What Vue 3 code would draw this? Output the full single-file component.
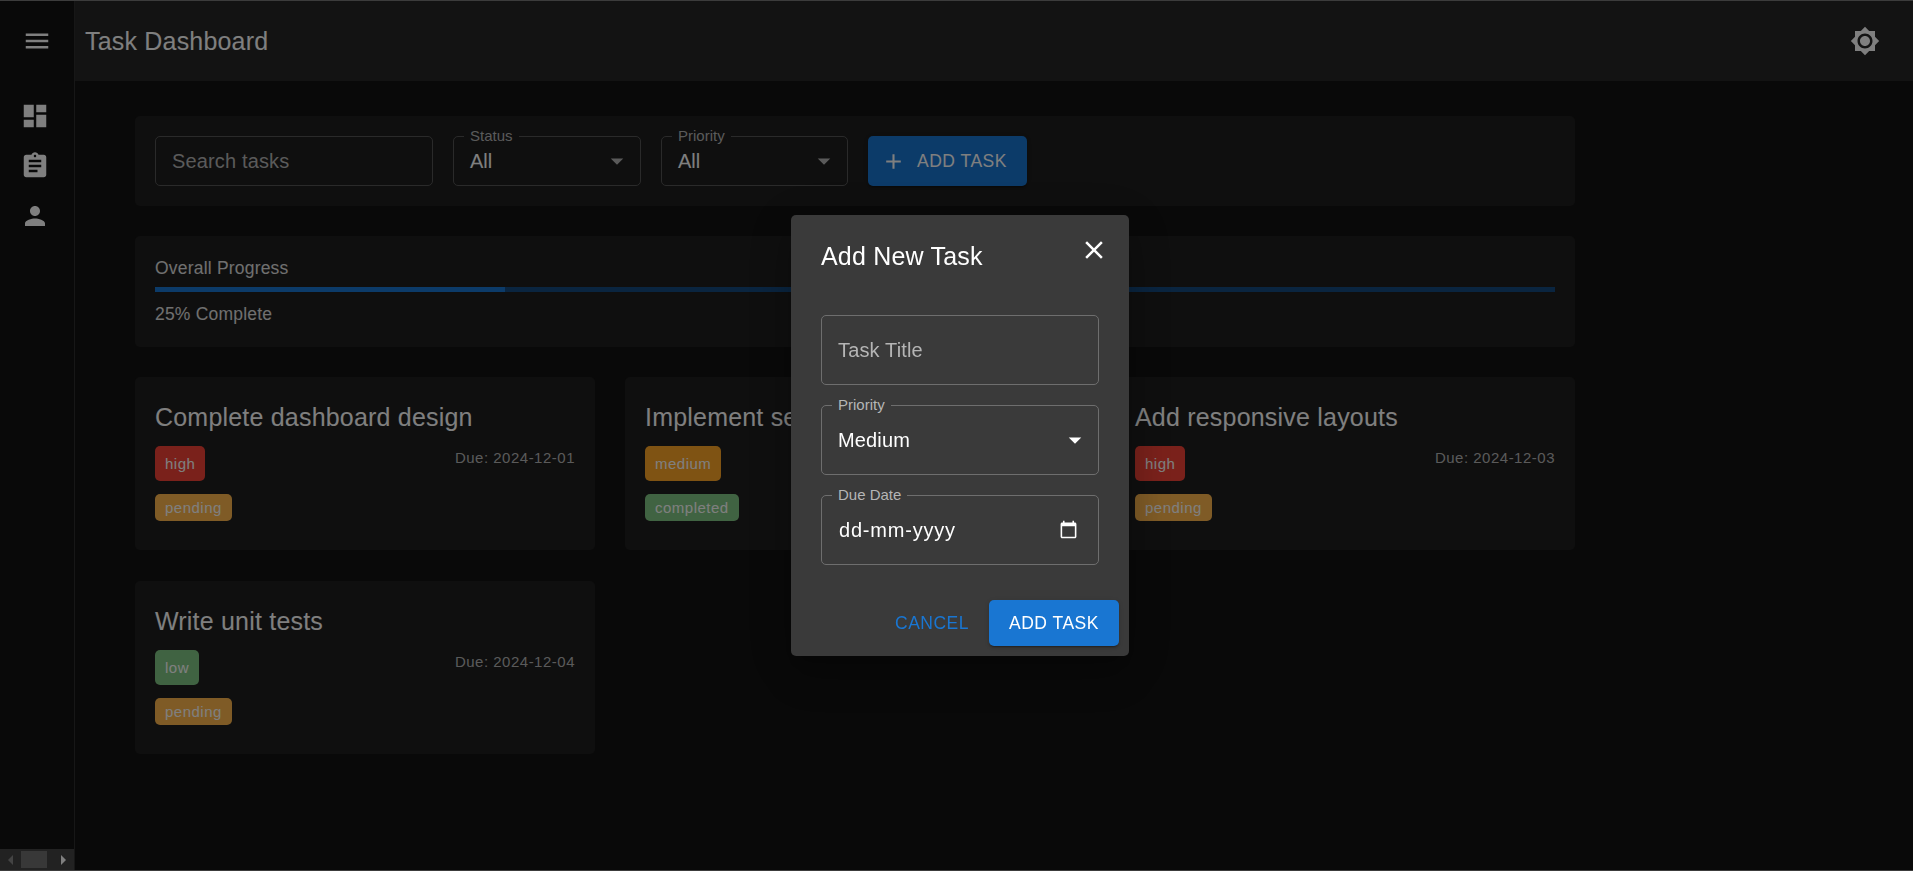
<template>
  <div class="app">
    <aside class="sidebar">
      <button class="menu-btn">
        <svg class="icon" viewBox="0 0 24 24"><path d="M3 18h18v-2H3v2zm0-5h18v-2H3v2zm0-7v2h18V6H3z" /></svg>
      </button>
      <nav class="nav">
        <div v-for="item in navIcons" :key="item" class="nav-item">
          <svg class="icon" viewBox="0 0 24 24"><path :d="item" /></svg>
        </div>
      </nav>
      <div class="hscroll">
        <span class="arrow arrow-left"></span>
        <span class="thumb"></span>
        <span class="arrow arrow-right"></span>
      </div>
    </aside>

    <div class="main">
      <header class="appbar">
        <h1 class="app-title">Task Dashboard</h1>
        <svg class="icon" viewBox="0 0 24 24">
          <path d="M20 8.69V4h-4.69L12 .69 8.69 4H4v4.69L.69 12 4 15.31V20h4.69L12 23.31 15.31 20H20v-4.69L23.31 12 20 8.69zM12 18c-3.31 0-6-2.69-6-6s2.69-6 6-6 6 2.69 6 6-2.69 6-6 6zm0-10c-2.21 0-4 1.79-4 4s1.79 4 4 4 4-1.79 4-4-1.79-4-4-4z" />
        </svg>
      </header>

      <main class="content">
        <section class="panel toolbar">
          <input class="search" type="text" placeholder="Search tasks" />
          <div class="select select-status">
            <span class="select-label">Status</span>
            <span>All</span>
            <svg class="caret" viewBox="0 0 24 24"><path d="M7 10l5 5 5-5z" /></svg>
          </div>
          <div class="select">
            <span class="select-label">Priority</span>
            <span>All</span>
            <svg class="caret" viewBox="0 0 24 24"><path d="M7 10l5 5 5-5z" /></svg>
          </div>
          <button class="btn-primary btn-toolbar">
            <svg class="btn-icon" viewBox="0 0 24 24"><path d="M19 13h-6v6h-2v-6H5v-2h6V5h2v6h6v2z" /></svg>
            Add Task
          </button>
        </section>

        <section class="panel progress">
          <div class="progress-label">Overall Progress</div>
          <div class="progress-track">
            <div class="progress-fill" :style="{ width: progress + '%' }"></div>
          </div>
          <div class="progress-label">{{ progress }}% Complete</div>
        </section>

        <section class="cards">
          <article v-for="task in tasks" :key="task.title" class="panel card">
            <h2 class="card-title">{{ task.title }}</h2>
            <div class="card-row">
              <span class="chip chip-tall" :class="task.priority">{{ task.priority }}</span>
              <span class="due">Due: {{ task.due }}</span>
            </div>
            <span class="chip" :class="task.status">{{ task.status }}</span>
          </article>
        </section>
      </main>
    </div>

    <div class="overlay">
      <form class="dialog" @submit.prevent>
        <div class="dialog-head">
          <h3 class="dialog-title">Add New Task</h3>
          <svg class="dialog-close" viewBox="0 0 24 24">
            <path d="M19 6.41 17.59 5 12 10.59 6.41 5 5 6.41 10.59 12 5 17.59 6.41 19 12 13.41 17.59 19 19 17.59 13.41 12z" />
          </svg>
        </div>
        <div class="dialog-body">
          <input class="field field-input" type="text" placeholder="Task Title" />
          <div class="field">
            <span class="field-label">Priority</span>
            <span>Medium</span>
            <svg class="caret caret-light" viewBox="0 0 24 24"><path d="M7 10l5 5 5-5z" /></svg>
          </div>
          <div class="field">
            <span class="field-label">Due Date</span>
            <span class="date-text">dd-mm-yyyy</span>
            <svg class="calendar" viewBox="0 0 24 24">
              <path d="M20 3h-1V1h-2v2H7V1H5v2H4c-1.1 0-2 .9-2 2v16c0 1.1.9 2 2 2h16c1.1 0 2-.9 2-2V5c0-1.1-.9-2-2-2zm0 18H4V8h16v13z" />
            </svg>
          </div>
        </div>
        <div class="dialog-actions">
          <button type="button" class="btn-text">Cancel</button>
          <button type="submit" class="btn-primary btn-dialog">Add Task</button>
        </div>
      </form>
    </div>
  </div>
</template>

<script setup>
import { ref } from 'vue'

const progress = ref(25)

const navIcons = [
  'M3 13h8V3H3v10zm0 8h8v-6H3v6zm10 0h8V11h-8v10zm0-18v6h8V3h-8z',
  'M19 3h-4.18C14.4 1.84 13.3 1 12 1c-1.3 0-2.4.84-2.82 2H5c-1.1 0-2 .9-2 2v14c0 1.1.9 2 2 2h14c1.1 0 2-.9 2-2V5c0-1.1-.9-2-2-2zm-7 0c.55 0 1 .45 1 1s-.45 1-1 1-1-.45-1-1 .45-1 1-1zm2 14H7v-2h7v2zm3-4H7v-2h10v2zm0-4H7V7h10v2z',
  'M12 12c2.21 0 4-1.79 4-4s-1.79-4-4-4-4 1.79-4 4 1.79 4 4 4zm0 2c-2.67 0-8 1.34-8 4v2h16v-2c0-2.66-5.33-4-8-4z'
]

const tasks = ref([
  { title: 'Complete dashboard design', priority: 'high', status: 'pending', due: '2024-12-01' },
  { title: 'Implement search feature', priority: 'medium', status: 'completed', due: '2024-12-02' },
  { title: 'Add responsive layouts', priority: 'high', status: 'pending', due: '2024-12-03' },
  { title: 'Write unit tests', priority: 'low', status: 'pending', due: '2024-12-04' }
])
</script>

<style>
html, body {
  margin: 0;
  background: #121212;
  overflow: hidden;
}
</style>

<style scoped>
.app {
  display: flex;
  height: 871px;
  font-family: "Liberation Sans", Arial, sans-serif;
  color: #fff;
  background: #121212;
}

.icon {
  width: 30px;
  height: 30px;
  fill: #fff;
  display: block;
}

.sidebar {
  width: 74px;
  flex: none;
  display: flex;
  flex-direction: column;
  border-right: 1px solid #2e2e2e;
  padding-bottom: 1px;
  box-sizing: content-box;
}

.menu-btn {
  height: 81px;
  padding: 0 0 0 22px;
  border: none;
  background: none;
  display: flex;
  align-items: center;
}

.nav {
  padding-top: 10px;
  flex: 1;
}

.nav-item {
  height: 50px;
  padding-left: 20px;
  display: flex;
  align-items: center;
}

.hscroll {
  height: 21px;
  display: flex;
  align-items: center;
  background: #444;
  padding-left: 8px;
}

.arrow {
  width: 0;
  height: 0;
  border-top: 5px solid transparent;
  border-bottom: 5px solid transparent;
}

.arrow-left {
  border-right: 5px solid #888;
}

.arrow-right {
  border-left: 5px solid #fff;
  margin-left: 14px;
}

.thumb {
  width: 26px;
  height: 17px;
  background: #707070;
  margin-left: 8px;
}

.main {
  flex: 1;
  min-width: 0;
  display: flex;
  flex-direction: column;
}

.appbar {
  height: 81px;
  flex: none;
  display: flex;
  align-items: center;
  justify-content: space-between;
  padding: 0 33px 0 10px;
  background: #272727;
}

.app-title {
  margin: 2px 0 0;
  font-size: 25px;
  font-weight: 400;
  letter-spacing: 0.19px;
}

.content {
  width: 1440px;
  margin-left: 60px;
  padding-top: 35px;
  display: flex;
  flex-direction: column;
  gap: 30px;
}

.panel {
  background: #1e1e1e;
  border-radius: 5px;
  box-sizing: border-box;
}

.toolbar {
  height: 90px;
  padding: 20px;
  display: flex;
  gap: 20px;
}

.search {
  width: 278px;
  height: 50px;
  box-sizing: border-box;
  padding: 0 16px;
  background: transparent;
  border: 1px solid #555;
  border-radius: 5px;
  color: #fff;
  font: 20px "Liberation Sans", Arial, sans-serif;
  letter-spacing: 0.15px;
  outline: none;
}

.search::placeholder,
.field-input::placeholder {
  color: #b5b5b5;
  opacity: 1;
}

.select {
  position: relative;
  width: 187px;
  height: 50px;
  box-sizing: border-box;
  padding-left: 16px;
  display: flex;
  align-items: center;
  border: 1px solid #555;
  border-radius: 5px;
  font-size: 20px;
}

.select-status {
  width: 188px;
}

.select-label {
  position: absolute;
  top: -10px;
  left: 10px;
  padding: 0 6px;
  background: #1e1e1e;
  font-size: 15px;
  line-height: 17px;
  color: #b5b5b5;
}

.caret {
  position: absolute;
  right: 8px;
  top: 9px;
  width: 30px;
  height: 30px;
  fill: #b5b5b5;
}

.caret-light {
  top: 19px;
  right: 8px;
  fill: #fff;
}

.btn-primary {
  background: #1976d2;
  color: #fff;
  border: none;
  border-radius: 5px;
  text-transform: uppercase;
  font-family: "Liberation Sans", Arial, sans-serif;
  font-size: 17.5px;
  letter-spacing: 0.5px;
  box-shadow: 0 3px 1px -2px rgba(0, 0, 0, 0.2), 0 2px 2px rgba(0, 0, 0, 0.14), 0 1px 5px rgba(0, 0, 0, 0.12);
}

.btn-toolbar {
  width: 159px;
  height: 50px;
  padding: 0 0 0 13px;
  display: flex;
  align-items: center;
  gap: 11px;
}

.btn-icon {
  width: 25px;
  height: 25px;
  fill: #fff;
}

.progress {
  height: 111px;
  padding: 19px 20px;
  display: flex;
  flex-direction: column;
}

.progress-label {
  font-size: 17.5px;
  line-height: 26px;
  letter-spacing: 0.2px;
  color: #e0e0e0;
}

.progress-track {
  height: 5px;
  margin: 6px 0 9px;
  background: #144a80;
}

.progress-fill {
  height: 100%;
  background: #1976d2;
}

.cards {
  display: grid;
  grid-template-columns: repeat(3, 460px);
  grid-auto-rows: 173px;
  gap: 31px 30px;
}

.card {
  padding: 20px;
  display: flex;
  flex-direction: column;
  align-items: flex-start;
}

.card-title {
  margin: 0 0 9px;
  font-size: 25px;
  line-height: 40px;
  font-weight: 400;
  letter-spacing: 0.2px;
  color: #fff;
}

.card-row {
  align-self: stretch;
  display: flex;
  justify-content: space-between;
  margin-bottom: 13px;
}

.chip {
  display: inline-flex;
  align-items: center;
  height: 27px;
  padding: 0 10px;
  border-radius: 5px;
  font-size: 15px;
  letter-spacing: 0.5px;
  color: #fff;
}

.chip-tall {
  height: 35px;
}

.high { background: #f44336; }
.medium { background: #ffa726; }
.low { background: #81c784; }
.pending { background: #ffb74d; }
.completed { background: #81c784; }

.due {
  font-size: 15px;
  line-height: 24px;
  letter-spacing: 0.5px;
  color: #b5b5b5;
}

.overlay {
  position: fixed;
  inset: 0;
  box-sizing: border-box;
  padding-left: 7px;
  display: flex;
  align-items: center;
  justify-content: center;
  background: rgba(0, 0, 0, 0.5);
  border-top: 1px solid #3c3c3c;
  border-bottom: 1px solid #3c3c3c;
}

.dialog {
  width: 338px;
  height: 441px;
  box-sizing: border-box;
  background: #3a3a3a;
  border-radius: 5px;
  display: flex;
  flex-direction: column;
  box-shadow: 0 11px 15px -7px rgba(0, 0, 0, 0.2), 0 24px 38px 3px rgba(0, 0, 0, 0.14), 0 9px 46px 8px rgba(0, 0, 0, 0.12);
}

.dialog-head {
  height: 80px;
  padding: 0 20px 0 30px;
  display: flex;
  justify-content: space-between;
  align-items: flex-start;
}

.dialog-title {
  margin: 21px 0 0;
  font-size: 25px;
  line-height: 40px;
  font-weight: 400;
  letter-spacing: 0.2px;
}

.dialog-close {
  width: 30px;
  height: 30px;
  margin-top: 20px;
  fill: #fff;
}

.dialog-body {
  padding: 20px 30px 0;
  display: flex;
  flex-direction: column;
  gap: 20px;
}

.field {
  position: relative;
  width: 278px;
  height: 70px;
  box-sizing: border-box;
  padding: 0 16px;
  display: flex;
  align-items: center;
  border: 1px solid #6e6e6e;
  border-radius: 5px;
  background: transparent;
  color: #fff;
  font-size: 20px;
  letter-spacing: 0.15px;
}

.field-input {
  font-family: "Liberation Sans", Arial, sans-serif;
  outline: none;
}

.field-label {
  position: absolute;
  top: -10px;
  left: 10px;
  padding: 0 6px;
  background: #3a3a3a;
  font-size: 15px;
  line-height: 17px;
  letter-spacing: 0;
  color: #b5b5b5;
}

.date-text {
  margin-left: 1px;
  letter-spacing: 0.8px;
}

.calendar {
  position: absolute;
  right: 20px;
  top: 24px;
  width: 19px;
  height: 19px;
  fill: #fff;
}

.dialog-actions {
  margin-top: auto;
  height: 66px;
  padding: 0 10px 10px;
  box-sizing: border-box;
  display: flex;
  justify-content: flex-end;
  align-items: flex-end;
  gap: 10px;
}

.btn-text {
  height: 46px;
  padding: 0 10px;
  background: none;
  border: none;
  color: #1976d2;
  text-transform: uppercase;
  font-family: "Liberation Sans", Arial, sans-serif;
  font-size: 17.5px;
  letter-spacing: 0.5px;
}

.btn-dialog {
  width: 130px;
  height: 46px;
  padding: 0;
}
</style>
